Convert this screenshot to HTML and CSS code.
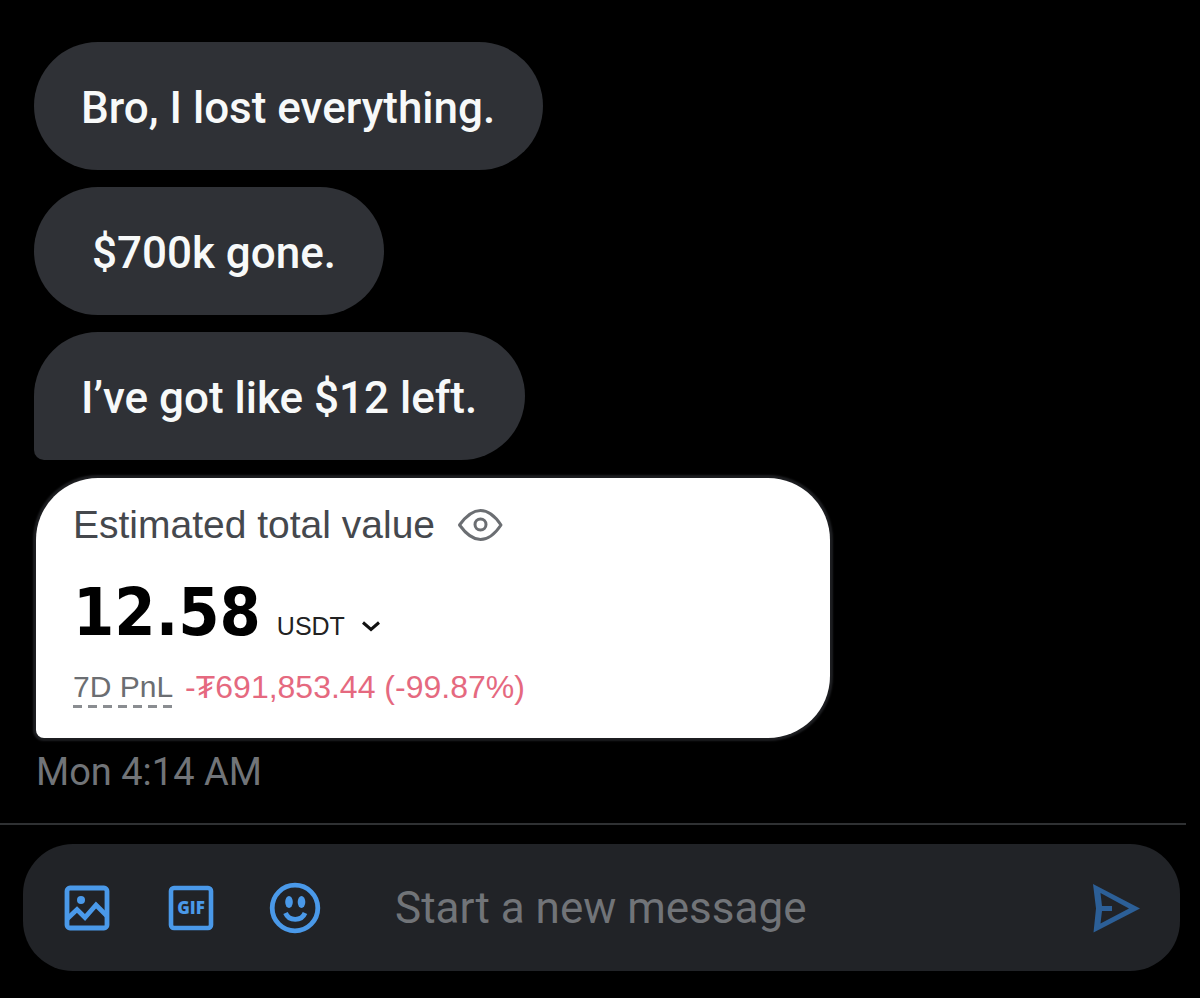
FILE: index.html
```html
<!DOCTYPE html>
<html lang="en">
<head>
    <meta charset="UTF-8">
    <meta name="viewport" content="width=device-width, initial-scale=1.0">
    <title>Messages</title>
    <link rel="stylesheet" href="styles.css">
</head>
<body>
    <main class="chat">
        <div class="messages">
            <p class="bubble">Bro, I lost everything.</p>
            <p class="bubble"> $700k gone.</p>
            <p class="bubble bubble-last">I’ve got like $12 left.</p>

            <div class="balance-card">
                <div class="balance-title">
                    <span>Estimated total value</span>
                    <button class="icon-button eye-btn" type="button" aria-label="Hide balance">
                        <svg width="46" height="34" viewBox="0 0 46 34" fill="none" stroke="#6b6e72" stroke-width="3">
                            <path d="M2.500 17C9 8 15 2.500 23.500 2.500S38 8 44 17C38 26 32 31.500 23.500 31.500S9 26 2.500 17Z" stroke-linejoin="round"/>
                            <circle cx="23.500" cy="16.500" r="5.500"/>
                        </svg>
                    </button>
                </div>
                <div class="balance-row">
                    <span class="balance-amount">12.58</span>
                    <button class="currency-btn" type="button">
                        USDT
                        <svg width="20" height="14" viewBox="0 0 20 14" fill="none" stroke="#111" stroke-width="3">
                            <path d="M2 3.500l8 7 8-7"/>
                        </svg>
                    </button>
                </div>
                <div class="pnl-row">
                    <span class="pnl-label">7D PnL</span>
                    <span class="pnl-value">-₮691,853.44 (-99.87%)</span>
                </div>
            </div>

            <time class="timestamp">Mon 4:14 AM</time>
        </div>

        <hr class="divider">

        <form class="composer">
            <button class="icon-button" type="button" aria-label="Add photo">
                <svg width="52" height="52" viewBox="0 0 52 52" fill="none" stroke="currentColor" stroke-width="4.800">
                    <rect x="6" y="6" width="40" height="40" rx="3"/>
                    <path d="M6 37l10-9.500 8 8L35 23l11 11"/>
                    <circle cx="20" cy="18" r="4" fill="currentColor" stroke="none"/>
                </svg>
            </button>
            <button class="icon-button" type="button" aria-label="Add GIF">
                <svg width="52" height="52" viewBox="0 0 52 52">
                    <rect x="6" y="6" width="40" height="40" rx="3" fill="none" stroke="currentColor" stroke-width="4.600"/>
                    <text class="gif-text" x="26" y="32" text-anchor="middle">GIF</text>
                </svg>
            </button>
            <button class="icon-button" type="button" aria-label="Add emoji">
                <svg width="52" height="52" viewBox="0 0 52 52" fill="none" stroke="currentColor" stroke-width="4.800">
                    <circle cx="26" cy="26" r="22.800"/>
                    <path d="M16.500 31c3.500 8.500 16 8.500 19.500 0"/>
                    <g fill="currentColor" stroke="none">
                        <ellipse cx="20" cy="20" rx="3.800" ry="6"/>
                        <ellipse cx="32.500" cy="20" rx="3.800" ry="6"/>
                    </g>
                </svg>
            </button>
            <input class="composer-input" type="text" placeholder="Start a new message" aria-label="Start a new message">
            <button class="icon-button send-btn" type="submit" aria-label="Send">
                <svg width="52" height="52" viewBox="0 0 52 52" fill="currentColor">
                    <path fill-rule="evenodd" d="M3 2l47 24.500L3.500 50.500 6 26.500zM10.500 11l1.500 13h10v5H12l-1.500 12.500L39 26.500z"/>
                </svg>
            </button>
        </form>
    </main>
</body>
</html>
```
FILE: styles.css
```css
:root {
    --bubble: #2f3136;
    --field: #212327;
    --blue: #4a99e9;
    --muted: #717478;
    --loss: #e5697f;
}

* {
    box-sizing: border-box;
}

body {
    margin: 0;
    background: #000;
    color: #f7f9f9;
    font-family: Roboto, "Liberation Sans", sans-serif;
}

button {
    padding: 0;
    border: none;
    background: none;
    font: inherit;
    cursor: pointer;
}

svg {
    display: block;
}

.messages {
    display: flex;
    flex-direction: column;
    align-items: flex-start;
    gap: 17px;
    padding: 42px 34px 0;
}

.bubble {
    margin: 0;
    padding: 38px 48px 34px 47px;
    border-radius: 64px;
    background: var(--bubble);
    font-size: 44px;
    font-weight: 500;
    line-height: 56px;
    white-space: pre;
}

.bubble-last {
    border-bottom-left-radius: 10px;
}

/* Balance card */
.balance-card {
    width: 100%;
    max-width: 794px;
    margin: 1px 0 0 2px;
    padding: 25px 37px 30px;
    border-radius: 62px 62px 62px 8px;
    background: #fff;
    box-shadow: 0 0 2px 3px #1d1e21;
    color: #45484d;
    font-family: "Liberation Sans", Arial, sans-serif;
}

.balance-title {
    display: flex;
    align-items: center;
    gap: 22px;
    font-size: 39px;
    line-height: 44px;
}

.balance-row {
    display: flex;
    align-items: baseline;
    gap: 16px;
    margin-top: 26px;
    line-height: 80px;
}

.balance-amount {
    color: #000;
    font-family: "DejaVu Sans Condensed", "DejaVu Sans", sans-serif;
    font-size: 66px;
    font-stretch: condensed;
    font-weight: 700;
}

.currency-btn {
    display: flex;
    align-items: center;
    gap: 16px;
    color: #222;
    font-size: 25px;
    line-height: 32px;
}

.pnl-row {
    display: flex;
    gap: 12px;
    margin-top: 16px;
    font-size: 32px;
    line-height: 36px;
}

.pnl-label {
    padding-bottom: 3px;
    background: repeating-linear-gradient(90deg, #8a8d91 0 9px, transparent 9px 15px) left bottom / 100% 3px no-repeat;
    color: #6b6e72;
    font-size: 30px;
}

.pnl-value {
    color: var(--loss);
}

.timestamp {
    margin: -7px 0 0 2px;
    color: var(--muted);
    font-size: 38px;
    line-height: 48px;
}

.divider {
    height: 2px;
    margin: 27px 14px 0 0;
    border: none;
    background: #2f3133;
}

/* Composer */
.composer {
    display: flex;
    align-items: center;
    gap: 52px;
    margin: 19px 20px 26px 23px;
    padding: 37px 38px;
    border-radius: 50px;
    background: var(--field);
}

.icon-button {
    flex: none;
    color: var(--blue);
}

.gif-text {
    fill: currentColor;
    font-family: "Open Sans", sans-serif;
    font-size: 17px;
    font-weight: 800;
}

.composer-input {
    flex: 1;
    min-width: 0;
    height: 53px;
    padding: 0 0 0 22px;
    border: none;
    outline: none;
    background: none;
    color: #e7e9ea;
    font-family: inherit;
    font-size: 44px;
}

.composer-input::placeholder {
    color: var(--muted);
    opacity: 1;
}

.send-btn {
    color: #2c5f97;
}
```
